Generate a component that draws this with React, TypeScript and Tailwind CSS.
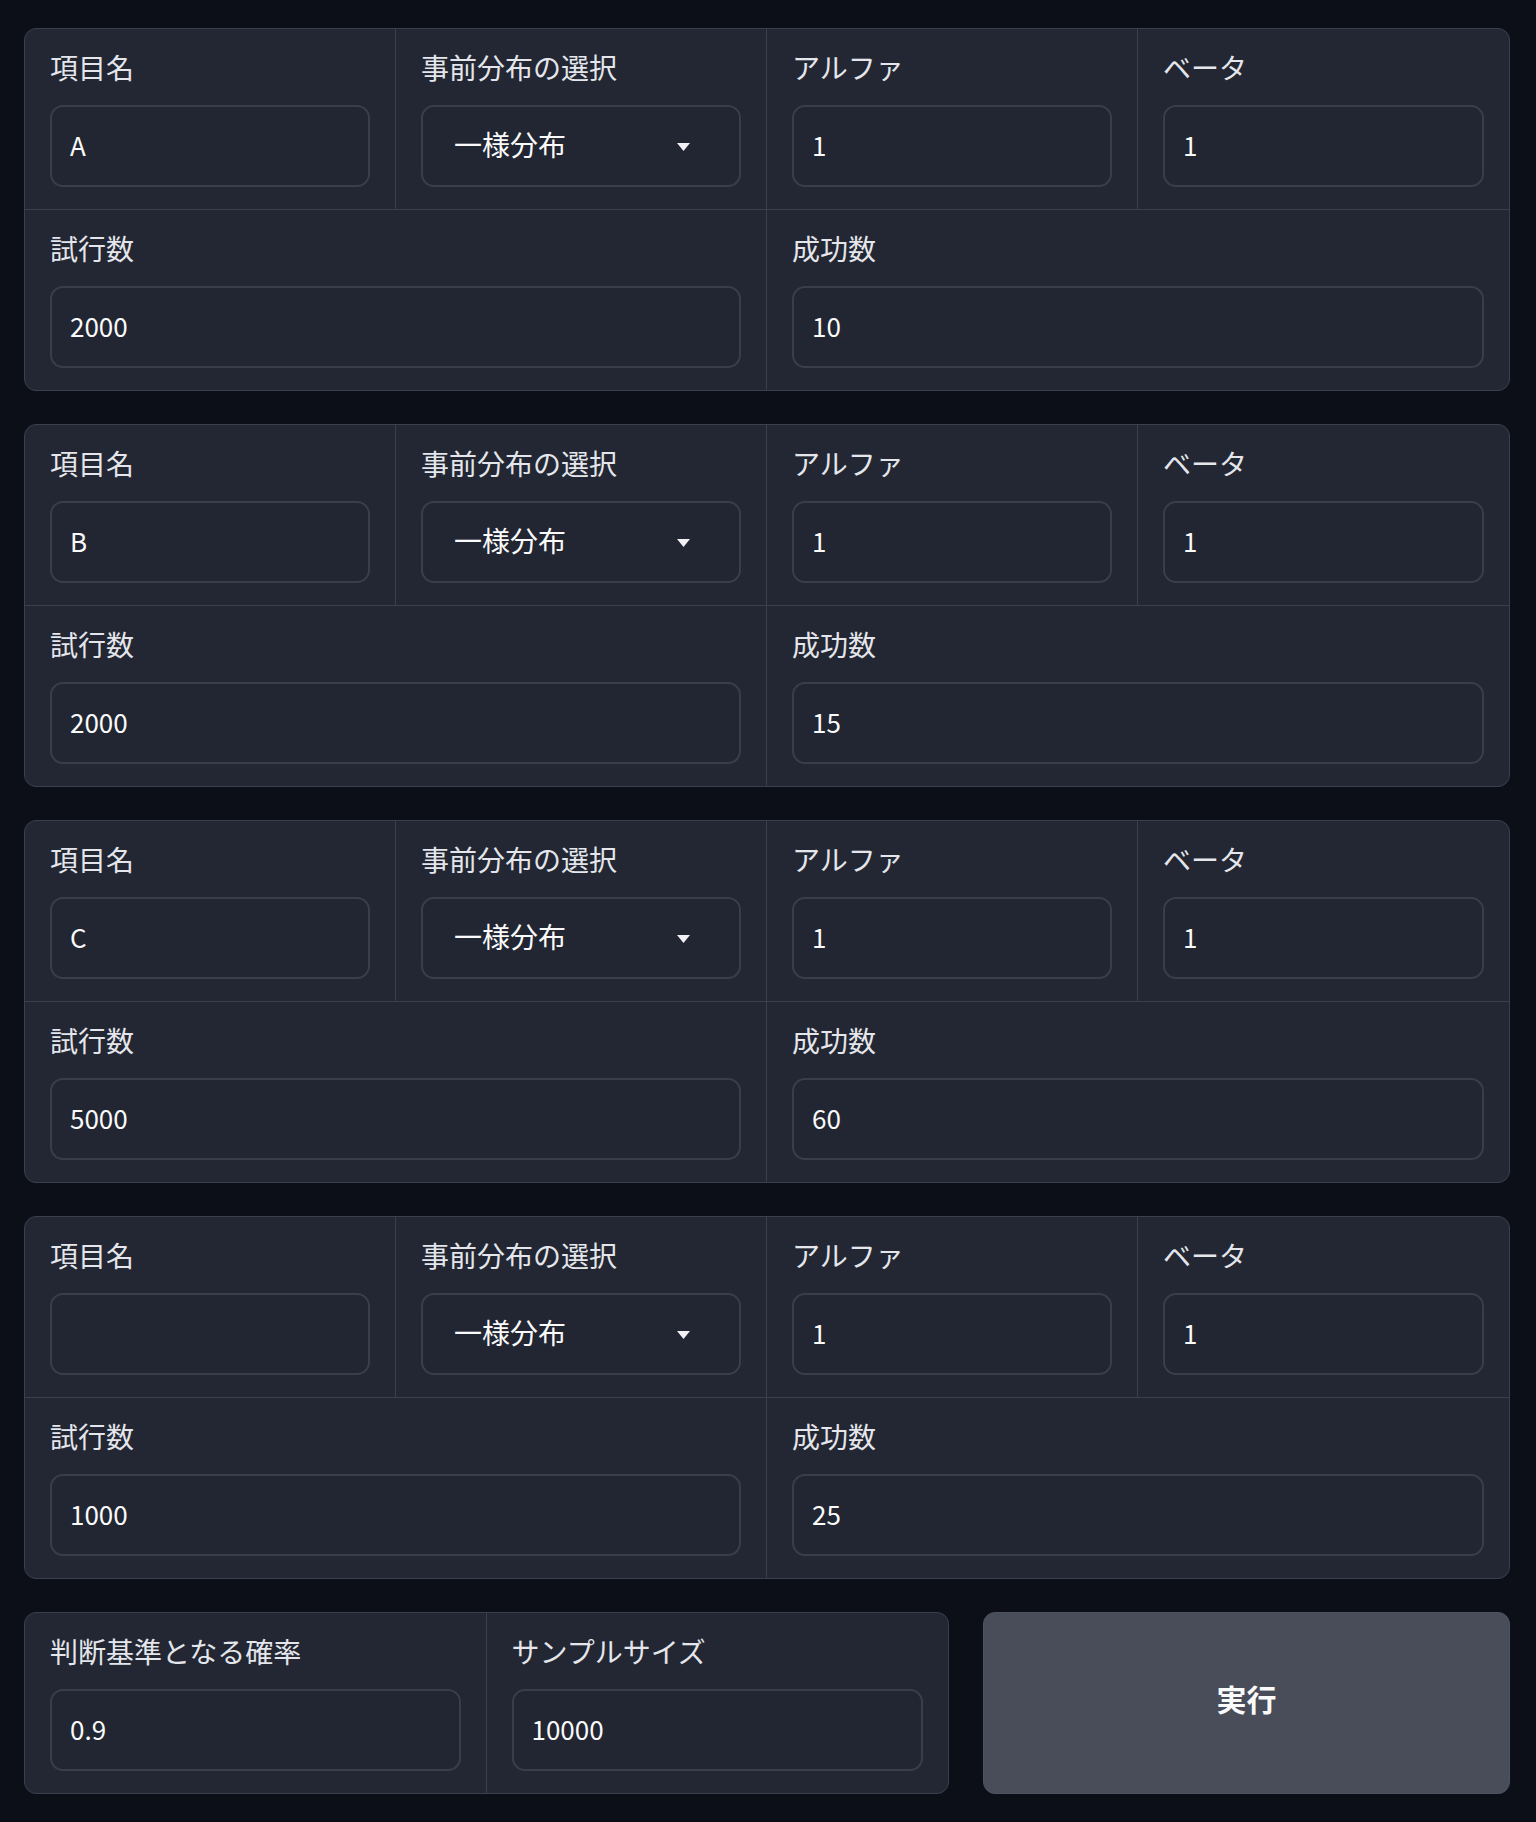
import React from "react";

// ─── Data ─────────────────────────────────────────────────────────────────────

interface Arm {
  name: string;
  trials: string;
  successes: string;
}

const ARMS: Arm[] = [
  { name: "A", trials: "2000", successes: "10" },
  { name: "B", trials: "2000", successes: "15" },
  { name: "C", trials: "5000", successes: "60" },
  { name: "", trials: "1000", successes: "25" },
];

// ─── Pieces ───────────────────────────────────────────────────────────────────

function Label({ children }: { children: React.ReactNode }) {
  return (
    <div className="flex h-[36px] items-center pb-[4px] text-[28px] leading-none text-[#e4e6eb]">
      {children}
    </div>
  );
}

function TextBox({ value }: { value: string }) {
  return (
    <div className="mt-[18px] flex h-[82px] items-center rounded-[13px] border-2 border-[#393e4a] bg-[#212632] pl-[18px] pb-[2px] text-[26px] leading-none text-[#fafafa]">
      {value}
    </div>
  );
}

function SelectBox({ value }: { value: string }) {
  return (
    <div className="mt-[18px] flex h-[82px] items-center justify-between rounded-[13px] border-2 border-[#393e4a] bg-[#212632] pl-[31px] pr-[49px] text-[28px] leading-none text-[#fafafa]">
      <span className="pb-[4px]">{value}</span>
      <svg width="13" height="8" viewBox="0 0 13 8" className="mt-[2px]">
        <path d="M0 0h13L6.5 8z" fill="#f2f2f4" />
      </svg>
    </div>
  );
}

function Cell({
  label,
  children,
  className = "",
}: {
  label: string;
  children: React.ReactNode;
  className?: string;
}) {
  return (
    <div className={`px-[25px] pt-[22px] pb-[22px] ${className}`}>
      <Label>{label}</Label>
      {children}
    </div>
  );
}

function ArmCard({ arm }: { arm: Arm }) {
  return (
    <div className="overflow-hidden rounded-[12px] border border-[#3a3f4b] bg-[#222733]">
      <div className="grid grid-cols-4">
        <Cell label="項目名" className="border-r border-[#3a3f4b]">
          <TextBox value={arm.name} />
        </Cell>
        <Cell label="事前分布の選択" className="border-r border-[#3a3f4b]">
          <SelectBox value="一様分布" />
        </Cell>
        <Cell label="アルファ" className="border-r border-[#3a3f4b]">
          <TextBox value="1" />
        </Cell>
        <Cell label="ベータ">
          <TextBox value="1" />
        </Cell>
      </div>
      <div className="grid grid-cols-2 border-t border-[#3a3f4b]">
        <Cell label="試行数" className="border-r border-[#3a3f4b]">
          <TextBox value={arm.trials} />
        </Cell>
        <Cell label="成功数">
          <TextBox value={arm.successes} />
        </Cell>
      </div>
    </div>
  );
}

// ─── Main ─────────────────────────────────────────────────────────────────────

export default function App() {
  return (
    <div
      className="min-h-screen bg-[#0c0f17] pt-[28px] pb-[30px] pl-6 pr-[26px]"
      style={{ fontFamily: '"Noto Sans CJK JP", "Noto Sans", sans-serif' }}
    >
      <div className="flex flex-col gap-[33px]">
        {ARMS.map((arm, i) => (
          <ArmCard key={i} arm={arm} />
        ))}

        <div className="flex gap-[34px]">
          <div className="grid w-[925px] grid-cols-2 overflow-hidden rounded-[12px] border border-[#3a3f4b] bg-[#222733]">
            <Cell label="判断基準となる確率" className="border-r border-[#3a3f4b]">
              <TextBox value="0.9" />
            </Cell>
            <Cell label="サンプルサイズ">
              <TextBox value="10000" />
            </Cell>
          </div>
          <button className="flex flex-1 items-center justify-center rounded-[12px] border border-[#4e5360] bg-[#484d59] pb-[10px] text-[30px] leading-none font-bold text-[#fafafa]">
            実行
          </button>
        </div>
      </div>
    </div>
  );
}
